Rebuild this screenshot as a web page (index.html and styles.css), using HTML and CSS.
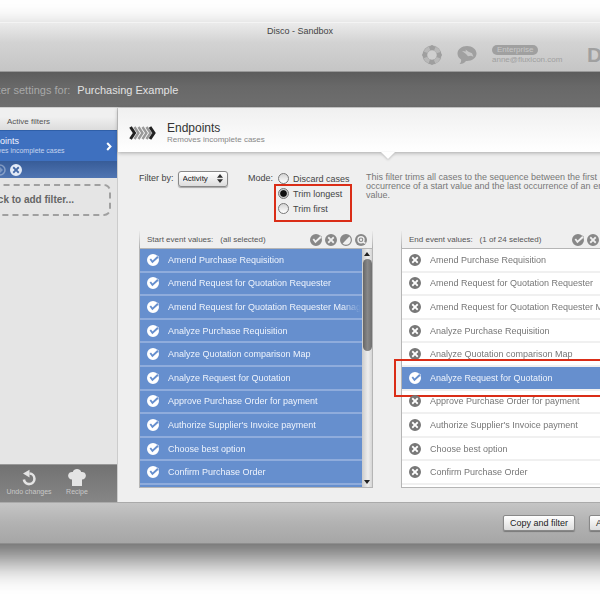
FILE: index.html
```
<!DOCTYPE html>
<html lang="en">
<head>
    <meta charset="UTF-8">
    <meta name="viewport" content="width=device-width, initial-scale=1.0">
    <title>Disco - Sandbox</title>
    <link rel="stylesheet" href="styles.css">
</head>
<body>
    <svg class="symbols" aria-hidden="true">
        <symbol id="check" viewBox="0 0 12 12">
            <path fill-rule="evenodd" d="M6 0a6 6 0 1 1 0 12A6 6 0 0 1 6 0zM2.6 5.6l2.7 3.6L12 3.2 10.8 1.6 5.6 6.4 4 4.6z"/>
        </symbol>
        <symbol id="cross" viewBox="0 0 12 12">
            <path fill-rule="evenodd" d="M6 0a6 6 0 1 1 0 12A6 6 0 0 1 6 0zM3.9 2.6L2.6 3.9 4.7 6 2.6 8.1 3.9 9.4 6 7.3l2.1 2.1 1.3-1.3L7.3 6l2.1-2.1-1.3-1.3L6 4.7z"/>
        </symbol>
        <symbol id="invert" viewBox="0 0 12 12">
            <path fill-rule="evenodd" d="M6 0a6 6 0 1 1 0 12A6 6 0 0 1 6 0zM9.4 2.6L2.600 9.400A4.800 4.800 0 0 0 9.400 2.600z"/>
        </symbol>
        <symbol id="search" viewBox="0 0 12 12">
            <circle cx="6" cy="6" r="6"/>
            <circle cx="6" cy="5.8" r="3" fill="none" stroke="#eee" stroke-width="1.400"/>
            <path d="M8 8l2.400 1.400" stroke="#eee" stroke-width="1.600"/>
            <circle cx="6" cy="5.800" r="1.200" fill="#eee"/>
        </symbol>
    </svg>

    <div class="window">
        <header class="titlebar">
            <h1>Disco - Sandbox</h1>
            <div class="tools">
                <svg class="tool-icon" viewBox="0 0 20 20">
                    <circle cx="10" cy="10" r="9.700" fill="#bcbcbc"/>
                    <circle cx="10" cy="10" r="7" fill="none" stroke="#9f9f9f" stroke-width="4.600"/>
                    <circle cx="10" cy="10" r="7" fill="none" stroke="#b9b9b9" stroke-width="4" stroke-dasharray="5.600 5.400" stroke-dashoffset="-2.700"/>
                    <path d="M7.500 1.500L10 0l2.500 1.500zM7.500 18.500L10 20l2.500-1.500zM1.500 7.500L0 10l1.500 2.500zM18.500 7.500L20 10l-1.500 2.500z" fill="#9f9f9f"/>
                    <circle cx="10" cy="10" r="4.600" fill="#cfcfcf"/>
                </svg>
                <svg class="tool-icon" viewBox="0 0 20 20">
                    <path d="M10 1c5.300 0 9.500 3.300 9.500 7.500S15.300 16 10 16l-1 0c-1.500 2-4 3.300-6.500 3 1.500-1.400 1.900-3 1.500-4.500C1.800 13 .5 11 .5 8.500.5 4.300 4.700 1 10 1z" fill="#a0a0a0"/>
                    <path d="M5 6l4 .4L8.500 4.500l3 2.300 3.500 1.500 1.500 3.500-2.500-1-3 .4-2-2.200z" fill="#c6c6c6"/>
                </svg>
                <div class="account">
                    <span class="badge">Enterprise</span>
                    <span>anne@fluxicon.com</span>
                </div>
                <div class="brand">Disco</div>
            </div>
        </header>

        <div class="context">
            <span class="context-label">Filter settings for:</span>
            <span>Purchasing Example</span>
        </div>

        <div class="content">
            <aside class="sidebar">
                <h2>Active filters</h2>
                <div class="active-filter">
                    <div>
                        <strong>Endpoints</strong>
                        <p>Removes incomplete cases</p>
                    </div>
                    <svg class="arrow" viewBox="0 0 6 9"><path d="M1.200 1l3.300 3.500L1.200 8" fill="none" stroke="#fff" stroke-width="2"/></svg>
                </div>
                <div class="filter-actions">
                    <svg class="icon dimmed" viewBox="0 0 12 12"><circle cx="6" cy="6" r="5" fill="none" stroke="#fff" stroke-width="1.500"/><path d="M6 3l3 3-3 3"/></svg>
                    <svg class="icon"><use href="#cross"/></svg>
                </div>
                <button class="add-filter">Click to add filter...</button>
                <div class="sidebar-tools">
                    <button>
                        <svg viewBox="0 0 18 18"><path d="M9.500 4.500a5.300 5.300 0 1 1-5.600 6" fill="none" stroke="#e4e4e4" stroke-width="2.600"/><path d="M3 4.600L9.500.8v7.600z" fill="#e4e4e4"/></svg>
                        Undo changes
                    </button>
                    <button>
                        <svg viewBox="0 0 18 18"><path d="M4 17v-6.500A3.800 3.800 0 1 1 4.800 3 4.500 4.500 0 0 1 13.200 3 3.800 3.800 0 1 1 14 10.500V17z" fill="#e4e4e4"/></svg>
                        Recipe
                    </button>
                </div>
            </aside>

            <main class="main">
                <div class="filter-header">
                    <svg class="filter-icon" viewBox="0 0 27 14" fill="none" stroke-width="3">
                        <path d="M5.500 1l4 6-4 6M9.500 1l4 6-4 6M13.500 1l4 6-4 6M17.500 1l4 6-4 6" stroke="#999" stroke-width="2.400"/>
                        <path d="M1.500 1l4 6-4 6M21 1l4 6-4 6" stroke="#222"/>
                    </svg>
                    <div>
                        <h2>Endpoints</h2>
                        <p>Removes incomplete cases</p>
                    </div>
                </div>

                <div class="settings">
                    <div class="filter-by">
                        <label for="filterBy">Filter by:</label>
                        <div class="select">
                            <select id="filterBy"><option>Activity</option></select>
                            <svg viewBox="0 0 6 9"><path d="M0 3.700L3 0l3 3.700zM0 5.300h6L3 9z"/></svg>
                        </div>
                    </div>
                    <div class="mode">
                        <span>Mode:</span>
                        <div class="mode-options">
                            <label><input type="radio" name="mode">Discard cases</label>
                            <label><input type="radio" name="mode" checked>Trim longest</label>
                            <label><input type="radio" name="mode">Trim first</label>
                        </div>
                    </div>
                    <p class="description">This filter trims all cases to the sequence between the first occurrence of a start value and the last occurrence of an end value.</p>
                </div>

                <div class="panels">
                    <section class="panel">
                        <div class="panel-header">
                            <span>Start event values:</span>
                            <span>(all selected)</span>
                            <div class="panel-icons">
                                <svg class="icon"><use href="#check"/></svg>
                                <svg class="icon"><use href="#cross"/></svg>
                                <svg class="icon"><use href="#invert"/></svg>
                                <svg class="icon"><use href="#search"/></svg>
                            </div>
                        </div>
                        <div class="panel-body">
                            <ul class="values all" id="startValues"></ul>
                            <div class="scrollbar"><i class="up"></i><i class="track"></i><i class="down"></i></div>
                        </div>
                    </section>
                    <section class="panel">
                        <div class="panel-header">
                            <span>End event values:</span>
                            <span>(1 of 24 selected)</span>
                            <div class="panel-icons">
                                <svg class="icon"><use href="#check"/></svg>
                                <svg class="icon"><use href="#cross"/></svg>
                                <svg class="icon"><use href="#invert"/></svg>
                                <svg class="icon"><use href="#search"/></svg>
                            </div>
                        </div>
                        <div class="panel-body">
                            <ul class="values" id="endValues"></ul>
                            <div class="scrollbar"><i class="up"></i><i class="track"></i><i class="down"></i></div>
                        </div>
                    </section>
                </div>
            </main>
        </div>

        <footer class="footer">
            <button class="push">Cancel</button>
            <button class="push">Copy and filter</button>
            <button class="push">Apply filter</button>
        </footer>
    </div>

    <script>
        const activities = [
            'Amend Purchase Requisition',
            'Amend Request for Quotation Requester',
            'Amend Request for Quotation Requester Manager',
            'Analyze Purchase Requisition',
            'Analyze Quotation comparison Map',
            'Analyze Request for Quotation',
            'Approve Purchase Order for payment',
            "Authorize Supplier's Invoice payment",
            'Choose best option',
            'Confirm Purchase Order'
        ];

        function renderValues(id, isSelected, marked) {
            document.getElementById(id).innerHTML = activities.map(name => `
                <li class="${name === marked ? 'marked' : ''}">
                    <label>
                        <input type="checkbox" ${isSelected(name) ? 'checked' : ''}>
                        <svg class="icon on"><use href="#check"/></svg>
                        <svg class="icon off"><use href="#cross"/></svg>
                        <span>${name}</span>
                    </label>
                </li>`).join('');
        }

        renderValues('startValues', () => true);
        renderValues('endValues', name => name === 'Analyze Request for Quotation', 'Analyze Request for Quotation');
    </script>
</body>
</html>
```
FILE: styles.css
```
*,
*::before,
*::after {
    margin: 0;
    padding: 0;
    box-sizing: border-box;
}

body {
    font-family: "Liberation Sans", Arial, sans-serif;
    font-size: 9px;
    line-height: 12px;
    color: #444;
    background: #fff;
    overflow-x: hidden;
    padding: 22px 0 56px;
}

button, select, input {
    font: inherit;
    color: inherit;
}

h1, h2, strong {
    font-weight: normal;
}

ul {
    list-style: none;
}

.symbols {
    position: absolute;
    width: 0;
    height: 0;
}

.icon {
    width: 12px;
    height: 12px;
    flex: none;
    fill: currentColor;
}

/* the window is wider than the viewport on both sides */
.window {
    margin: 0 -60px;
    box-shadow: 0 16px 30px rgba(0, 0, 0, 0.6);
}

.titlebar {
    height: 50px;
    background: linear-gradient(#ebebeb, #d3d3d3 40%, #c5c5c5);
    border-top: 1px solid #f4f4f4;
    border-bottom: 1px solid #999;
}

.titlebar h1 {
    font-size: 9px;
    line-height: 16px;
    text-align: center;
    color: #444;
}

.tools {
    display: flex;
    justify-content: flex-end;
    align-items: center;
    height: 32px;
    color: #a0a0a0;
}

.tool-icon {
    width: 20px;
    height: 20px;
    margin-right: 15px;
}

.account {
    display: flex;
    flex-direction: column;
    align-items: flex-start;
    width: 95px;
    font-size: 8px;
    line-height: 10px;
}

.badge {
    padding: 0 5px;
    border-radius: 5px;
    background: #a0a0a0;
    color: #c8c8c8;
}

.brand {
    width: 73px;
    font-size: 21px;
    line-height: 24px;
    font-weight: bold;
}

.context {
    display: flex;
    align-items: center;
    gap: 7px;
    height: 35px;
    padding-left: 46px;
    font-size: 11px;
    color: #e2e2e2;
    background: linear-gradient(#5c5c5c, #686868 40%, #6e6e6e);
}

.context-label {
    color: #a8a8a8;
}

.content {
    display: flex;
    background: #efefef;
    border-top: 1px solid #d0d0d0;
}

/* sidebar */
.sidebar {
    display: flex;
    flex-direction: column;
    flex: none;
    width: 178px;
    background: #e5e5e5;
    border-right: 1px solid #ccc;
}

.sidebar h2 {
    height: 22px;
    padding-top: 8px;
    font-size: 8px;
    text-align: center;
    color: #555;
    background: linear-gradient(#f0f0f0 40%, #dcdcdc);
}

.active-filter {
    display: flex;
    align-items: center;
    justify-content: space-between;
    height: 31px;
    padding: 0 5px 0 39px;
    color: #f0f4ff;
    background: #3e70bf;
    border-top: 1px solid #2f5fa8;
}

.active-filter strong {
    display: block;
    line-height: 10px;
}

.active-filter p {
    font-size: 7px;
    line-height: 10px;
    color: #c5d4ee;
}

.arrow {
    width: 6px;
    height: 9px;
}

.filter-actions {
    display: flex;
    align-items: center;
    gap: 4px;
    height: 17px;
    padding-left: 54px;
    color: #e4ebf7;
    background: linear-gradient(#375c98, #5075b2);
}

.dimmed {
    opacity: 0.35;
}

.add-filter {
    height: 32px;
    margin: 6px;
    padding: 0 0 0 2px;
    font-size: 10px;
    font-weight: bold;
    color: #666;
    background: none;
    border: 2px dashed #a0a0a0;
    border-radius: 7px;
}

.sidebar-tools {
    display: flex;
    height: 38px;
    margin-top: auto;
    padding-left: 60px;
    background: linear-gradient(#727272, #868686);
    border-top: 1px solid #999;
}

.sidebar-tools button {
    display: flex;
    flex-direction: column;
    align-items: center;
    width: 58px;
    padding-top: 4px;
    font-size: 7px;
    line-height: 10px;
    white-space: nowrap;
    color: #c8c8c8;
    background: none;
    border: none;
}

.sidebar-tools button + button {
    width: 38px;
}

.sidebar-tools svg {
    width: 18px;
    height: 18px;
}

/* main area */
.main {
    flex: 1;
    min-width: 0;
}

.filter-header {
    position: relative;
    display: flex;
    align-items: center;
    gap: 11px;
    height: 44px;
    padding: 6px 11px 0;
    background: linear-gradient(#f0f0f0, #fff);
    box-shadow: 0 1px 4px rgba(0, 0, 0, 0.3);
}

/* notch pointing down to the settings */
.filter-header::after {
    content: "";
    position: absolute;
    top: 100%;
    left: 50%;
    margin-left: -8px;
    border: 7px solid transparent;
    border-top-color: #fff;
    border-bottom: none;
    filter: drop-shadow(0 1px 1px #bbb);
}

.filter-icon {
    width: 27px;
    height: 14px;
}

.filter-header h2 {
    font-size: 12px;
    line-height: 14px;
    color: #333;
}

.filter-header p {
    font-size: 8px;
    line-height: 10px;
    color: #888;
}

.settings {
    display: flex;
    height: 79px;
    padding: 19px 25px 0 21px;
}

.filter-by {
    display: flex;
    align-items: flex-start;
    gap: 4px;
    width: 109px;
    line-height: 14px;
}

.select {
    position: relative;
}

.select select {
    display: block;
    width: 50px;
    height: 16px;
    padding-left: 4px;
    font-size: 8px;
    appearance: none;
    color: #222;
    background: linear-gradient(#fff, #ddd);
    border: 1px solid #888;
    border-radius: 3px;
    box-shadow: 0 1px 1px rgba(0, 0, 0, 0.3);
}

.select svg {
    position: absolute;
    top: 3px;
    right: 5px;
    width: 6px;
    height: 9px;
    fill: #333;
    pointer-events: none;
}

.mode {
    display: flex;
    gap: 5px;
    width: 118px;
    line-height: 14px;
}

.mode-options {
    position: relative;
    display: flex;
    flex-direction: column;
    height: 46px;
}

.mode-options::after {
    content: "";
    position: absolute;
    top: 13px;
    left: -4px;
    width: 78px;
    height: 38px;
    border: 2px solid #da2d17;
    pointer-events: none;
}

.mode-options label {
    display: flex;
    align-items: center;
    gap: 4px;
    height: 15px;
    white-space: nowrap;
}

.mode-options input {
    width: 11px;
    height: 11px;
    appearance: none;
    background: linear-gradient(#d4d4d4, #fff);
    border: 1px solid #777;
    border-radius: 50%;
}

.mode-options input:checked {
    background: radial-gradient(#111 45%, #ccc 60%);
}

.description {
    flex: 1;
    padding: 2px 16px 0 0;
    line-height: 9px;
    color: #777;
}

.panels {
    display: grid;
    grid-template-columns: 1fr 1fr;
    gap: 28px;
    padding: 0 25px 14px 21px;
}

.panel {
    min-width: 0;
}

.panel-header {
    display: flex;
    align-items: center;
    gap: 7px;
    height: 17px;
    padding: 0 5px 0 7px;
    font-size: 8px;
    color: #555;
    border: solid;
    border-width: 0 1px;
    border-image: linear-gradient(#efefef, #aaa) 1;
}

.panel-icons {
    display: flex;
    gap: 3px;
    margin-left: auto;
    color: #888;
}

.panel-body {
    display: flex;
    border: 1px solid #b5b5b5;
}

.values {
    display: flex;
    flex-direction: column;
    flex: 1;
    min-width: 0;
    height: 238px;
    padding-bottom: 2px;
    background: #fff;
}

.values.all {
    background: #668fce;
}

.values li {
    position: relative;
    flex: 1;
    min-height: 0;
    border-bottom: 2px solid #f0f0f0;
    color: #777;
}

.values.all li {
    border-bottom-color: #8facdc;
}

.values label {
    display: flex;
    align-items: center;
    gap: 9px;
    height: 100%;
    padding-left: 7px;
}

.values label span {
    flex: 1;
    overflow: hidden;
    white-space: nowrap;
    mask-image: linear-gradient(to left, transparent 1px, #000 20px);
}

.values input {
    position: absolute;
    opacity: 0;
}

.values .on {
    display: none;
}

.values input:checked ~ .on {
    display: block;
    color: #fff;
}

.values input:checked ~ .off {
    display: none;
}

.values li:has(input:checked) {
    color: #eef3fc;
    background: #668fce;
}

.marked::after {
    content: "";
    position: absolute;
    inset: -8px -30px -8px -8px;
    border: 2px solid #da2d17;
    pointer-events: none;
}

.scrollbar {
    display: flex;
    flex-direction: column;
    align-items: center;
    width: 10px;
    padding: 3px 0;
    background: linear-gradient(to right, #ccc, #eee 60%, #d5d5d5);
}

.scrollbar .track {
    flex: 1;
    width: 9px;
    margin: 3px 0;
}

.scrollbar .track::before {
    content: "";
    display: block;
    width: 9px;
    height: 92px;
    border-radius: 5px;
    background: linear-gradient(to right, #666, #888 50%, #707070);
}

.scrollbar .up,
.scrollbar .down {
    border: 3px solid transparent;
}

.scrollbar .up {
    border-top: none;
    border-bottom: 4px solid #222;
}

.scrollbar .down {
    border-bottom: none;
    border-top: 4px solid #222;
}

/* bottom bar */
.footer {
    display: flex;
    align-items: center;
    gap: 14px;
    height: 42px;
    padding: 0 15px;
    background: linear-gradient(#c5c5c5, #b2b2b2 50%, #a6a6a6);
    border-top: 1px solid #aaa;
    border-bottom: 1px solid #8e8e8e;
}

.push {
    height: 16px;
    padding: 0 6px;
    line-height: 12px;
    color: #222;
    background: linear-gradient(#fff, #ddd);
    border: 1px solid #888;
    border-radius: 2px;
    box-shadow: 0 1px 1px rgba(0, 0, 0, 0.3);
}

.push:first-child {
    margin-right: auto;
}
```
